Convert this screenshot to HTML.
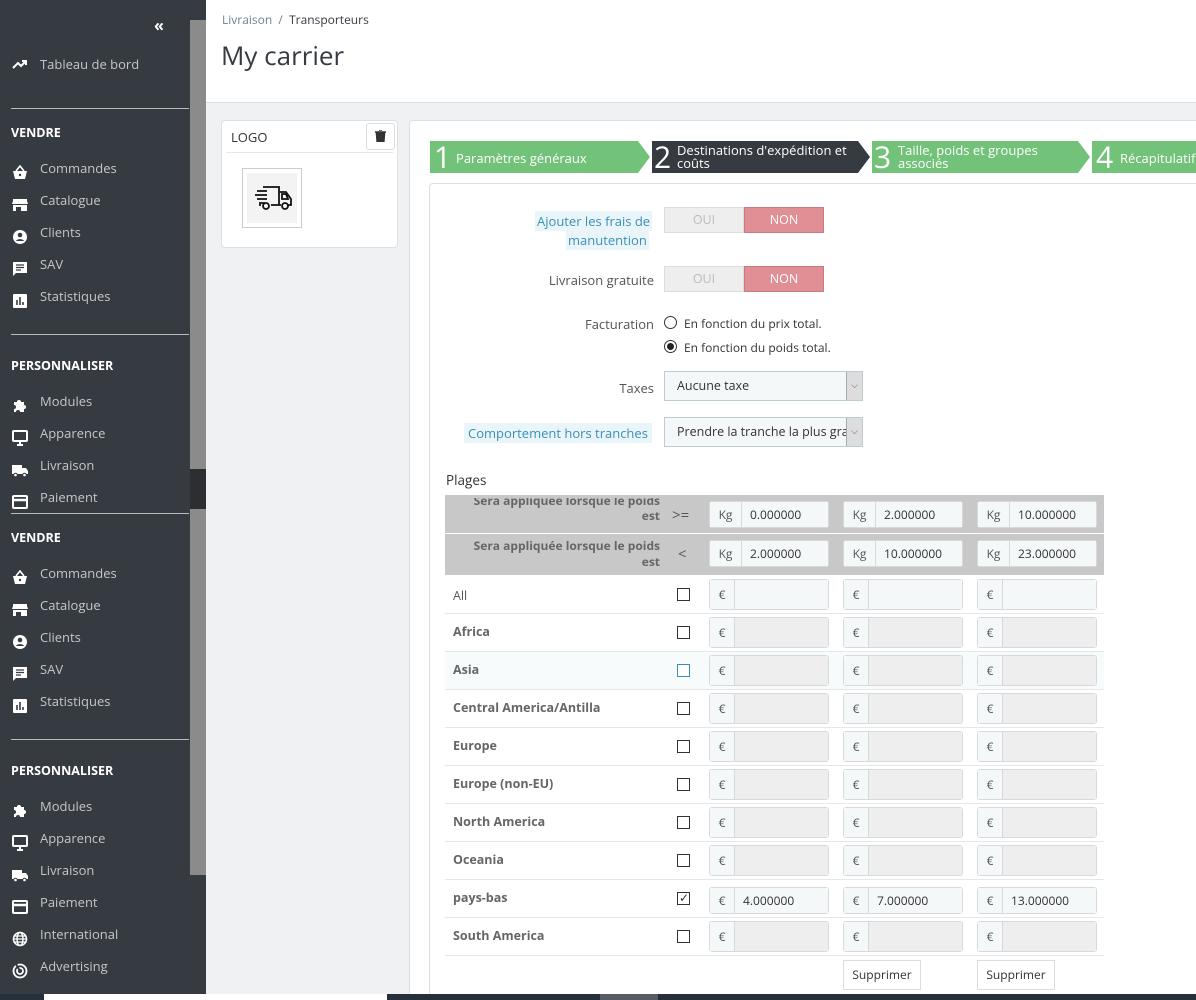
<!DOCTYPE html>
<html><head><meta charset="utf-8">
<style>
*{box-sizing:border-box;margin:0;padding:0}
html{width:1196px;height:1000px;overflow:hidden}
body{width:1196px;height:1000px;overflow:hidden;background:#eff1f2;font-family:"Open Sans","Liberation Sans",sans-serif;font-size:13px;color:#555;position:relative}
.a{position:absolute}
#sb{left:0;top:0;width:190px;height:1000px;background:#363a41;color:#bebebe}
.it{position:absolute;left:40px;font-size:13px;color:#c5c7ca}
.ic{position:absolute;left:12px;width:16px;height:14px}
.sec{position:absolute;left:11px;font-weight:bold;color:#fff;font-size:12.5px}
.hr{position:absolute;left:11px;width:178px;height:1px;background:#bbb}
.lbl{position:absolute;text-align:right;font-size:13px;color:#555}
.ig{position:absolute;width:120px;height:27px;border:1px solid #d6dadd;border-radius:3px;background:#eee;display:flex;font-size:12px}
.ig .ad{width:25px;background:#f5f8f9;border-right:1px solid #d6dadd;color:#555;text-align:center;line-height:25px}
.ig .kg{width:32px}
.ig .v{flex:1;background:#f5f8f9;padding-left:8px;line-height:25px;color:#333}
.ig .e{flex:1;background:#eee}
.cb{position:absolute;left:677px;width:13px;height:13px;border:1px solid #333;background:#fff}
.zn{position:absolute;left:453px;font-weight:bold;color:#666;font-size:12.5px}
.rl{position:absolute;left:445px;width:659px;height:1px;background:#e5e8ea}
.tg{position:absolute;left:664px;width:160px;height:26px;display:flex;font-size:12.5px}
.tg .o{width:80px;background:#eee;border:1px solid #ddd;color:#bbb;text-align:center;line-height:24px}
.tg .n{width:80px;background:#e08f95;border:1px solid #c97a80;color:#fff;text-align:center;line-height:24px}
.btn{position:absolute;top:960px;height:30px;border:1px solid #ddd;background:#fff;font-size:12px;color:#333;line-height:28px;text-align:center}
</style></head><body>
<div class="a" id="sb">
 <div class="a" style="left:154px;top:14px;color:#fff;font-size:16px;font-weight:bold">«</div>
 <svg class="ic" style="top:57px" viewBox="0 0 16 12"><path d="M1 10l5-5 3 3 5-5M10 3h4v4" stroke="#fff" stroke-width="2" fill="none"/></svg>
 <div class="it" style="top:55px">Tableau de bord</div>
 <div class="hr" style="top:108px"></div>
</div>
<div class="a" style="left:190px;top:0;width:16px;height:1000px;background:#8b8b8b"></div>
<div class="a" style="left:190px;top:0;width:16px;height:20px;background:#363a41"></div>
<div class="a" style="left:190px;top:469px;width:16px;height:40px;background:#2d2e32"></div>
<div class="a" style="left:190px;top:875px;width:16px;height:125px;background:#363a41"></div>

<div class="a" style="left:206px;top:0;width:990px;height:103px;background:#fff;border-bottom:1px solid #dde0e3"></div>
<div class="a" style="left:222px;top:11px;font-size:12px;color:#6c868e">Livraison &nbsp;/&nbsp; <span style="color:#363a41">Transporteurs</span></div>
<div class="a" style="left:221px;top:37px;font-size:26px;color:#363a41">My carrier</div>

<div class="a" style="left:221px;top:120px;width:177px;height:128px;background:#fff;border:1px solid #dbe0e3;border-radius:4px"></div>
<div class="a" style="left:231px;top:128px;font-size:13px;color:#333">LOGO</div>
<div class="a" style="left:366px;top:123px;width:29px;height:27px;border:1px solid #ddd;background:#fff;border-radius:3px"></div>
<svg class="a" style="left:375px;top:130px" width="11" height="12" viewBox="0 0 11 12"><path d="M0 2h11M4 0h3M1.5 3h8l-.7 9H2.2z" stroke="#333" stroke-width="1.6" fill="#333"/></svg>
<div class="a" style="left:226px;top:152px;width:167px;height:1px;background:#e5e8ea"></div>
<div class="a" style="left:242px;top:168px;width:60px;height:60px;border:1px solid #ccc;background:#fff"></div>
<div class="a" style="left:247px;top:173px;width:50px;height:50px;background:#f3f3f3"></div>
<svg class="a" style="left:251px;top:183px" width="42" height="30" viewBox="0 0 42 30"><path d="M12 4h16v18M28 9h7l5 7v6h-3M10 22h-2M20 22h10M6 8h10M4 12h12M6 16h10M8 20h6M31 11h4l2 5h-6z" stroke="#111" stroke-width="1.8" fill="none"/><circle cx="15" cy="23" r="3" stroke="#111" stroke-width="1.8" fill="none"/><circle cx="34" cy="23" r="3" stroke="#111" stroke-width="1.8" fill="none"/></svg>

<div class="a" style="left:409px;top:120px;width:800px;height:880px;background:#fff;border:1px solid #dbe0e3;border-radius:4px"></div>
<svg class="a" style="left:430px;top:141px" width="766" height="32">
 <polygon points="0,0 208,0 220,16 208,32 0,32" fill="#72c279"/>
 <polygon points="222,0 428,0 440,16 428,32 222,32" fill="#363a41"/>
 <polygon points="442,0 648,0 660,16 648,32 442,32" fill="#72c279"/>
 <polygon points="662,0 766,0 766,32 662,32" fill="#72c279"/>
</svg>
<div class="a" style="left:434px;top:139px;font-size:30px;color:#fff;line-height:36px">1</div>
<div class="a" style="left:456px;top:149px;font-size:13px;color:#fff">Paramètres généraux</div>
<div class="a" style="left:654px;top:139px;font-size:30px;color:#fff;line-height:36px">2</div>
<div class="a" style="left:677px;top:144px;font-size:13px;color:#fff;line-height:13px">Destinations d'expédition et<br>coûts</div>
<div class="a" style="left:874px;top:139px;font-size:30px;color:#fff;line-height:36px">3</div>
<div class="a" style="left:898px;top:144px;font-size:13px;color:#fff;line-height:13px">Taille, poids et groupes<br>associés</div>
<div class="a" style="left:1096px;top:139px;font-size:30px;color:#fff;line-height:36px">4</div>
<div class="a" style="left:1120px;top:149px;font-size:13px;color:#fff;white-space:nowrap">Récapitulatif</div>

<div class="a" style="left:429px;top:183px;width:780px;height:817px;background:#fff;border:1px solid #dbe0e3;border-radius:4px"></div>

<div class="a" style="left:535px;top:211px;background:#eaf5fa;color:#3a8fb7;font-size:13px;padding:0 2px;line-height:20px">Ajouter les frais de</div>
<div class="a" style="left:566px;top:230px;background:#eaf5fa;color:#3a8fb7;font-size:13px;padding:0 2px;line-height:20px">manutention</div>
<div class="tg" style="top:207px"><div class="o">OUI</div><div class="n">NON</div></div>
<div class="lbl" style="left:500px;width:154px;top:271px">Livraison gratuite</div>
<div class="tg" style="top:266px"><div class="o">OUI</div><div class="n">NON</div></div>
<div class="lbl" style="left:500px;width:154px;top:315px">Facturation</div>
<div class="a" style="left:664px;top:316px;width:13px;height:13px;border:1px solid #333;border-radius:50%"></div>
<div class="a" style="left:684px;top:315px;font-size:12px;color:#333">En fonction du prix total.</div>
<div class="a" style="left:664px;top:340px;width:13px;height:13px;border:1px solid #333;border-radius:50%"></div>
<div class="a" style="left:667px;top:343px;width:7px;height:7px;background:#222;border-radius:50%"></div>
<div class="a" style="left:684px;top:339px;font-size:12px;color:#333">En fonction du poids total.</div>
<div class="lbl" style="left:500px;width:154px;top:379px">Taxes</div>
<div class="a" style="left:664px;top:371px;width:199px;height:30px;border:1px solid #bbcdd2;background:#f5f8f9;font-size:12.5px;color:#333;padding-left:12px;line-height:28px">Aucune taxe</div>
<div class="a" style="left:846px;top:372px;width:16px;height:28px;background:#ddd;border-left:1px solid #aaa;font-size:9px;text-align:center;line-height:26px">⌵</div>
<div class="a" style="left:464px;top:423px;background:#eaf5fa;color:#3a8fb7;font-size:13px;padding:0 4px;line-height:20px">Comportement hors tranches</div>
<div class="a" style="left:664px;top:417px;width:199px;height:30px;border:1px solid #bbcdd2;background:#f5f8f9;font-size:12.5px;color:#333;padding-left:12px;line-height:28px;overflow:hidden;white-space:nowrap">Prendre la tranche la plus grande</div>
<div class="a" style="left:846px;top:418px;width:16px;height:28px;background:#ddd;border-left:1px solid #aaa;font-size:9px;text-align:center;line-height:26px">⌵</div>

<div class="a" style="left:446px;top:471px;font-size:13.5px;color:#333">Plages</div>

<div class="a" style="left:445px;top:495px;width:659px;height:38px;background:#c8c8c8"></div>
<div class="a" style="left:445px;top:534px;width:659px;height:41px;background:#c8c8c8"></div>
<div class="a" style="left:455px;top:498px;width:205px;text-align:right;font-weight:bold;color:#666;font-size:12px;line-height:15px;height:32px;overflow:hidden"><span style="position:relative;top:-5px">Sera appliquée lorsque le poids<br>est</span></div>
<div class="a" style="left:455px;top:538px;width:205px;text-align:right;font-weight:bold;color:#666;font-size:12px;line-height:16px">Sera appliquée lorsque le poids<br>est</div>
<div class="a" style="left:672px;top:505px;font-size:15px;color:#555">&gt;=</div>
<div class="a" style="left:678px;top:544px;font-size:15px;color:#555">&lt;</div>

<div id="rows"></div>
<div class="btn" style="left:843px;width:78px">Supprimer</div>
<div class="btn" style="left:977px;width:78px">Supprimer</div>

<div class="a" style="left:0;top:994px;width:1196px;height:6px;background:#25303a"></div>
<div class="a" style="left:44px;top:994px;width:343px;height:6px;background:#fff"></div>
<div class="a" style="left:600px;top:994px;width:58px;height:6px;background:#555c63"></div>

<script>
var IC={
Commandes:'<path d="M1 6h14l-2 8H3z" fill="#fff"/><path d="M4 6l4-5 4 5" stroke="#fff" stroke-width="1.6" fill="none"/><circle cx="8" cy="10" r="1.2" fill="#363a41"/>',
Catalogue:'<path d="M1 2h14v2l1 3H0l1-3z" fill="#fff"/><path d="M1 8h14v6H9v-4H4v4H1z" fill="#fff"/>',
Clients:'<circle cx="8" cy="8" r="7" fill="#fff"/><circle cx="8" cy="6" r="2.3" fill="#363a41"/><path d="M4 12c1-2.5 7-2.5 8 0" fill="#363a41"/>',
SAV:'<path d="M1 1h14v11H4l-3 3z" fill="#fff"/><path d="M4 4h8M4 6.5h8M4 9h5" stroke="#363a41" stroke-width="1.2"/>',
Statistiques:'<rect x="1" y="1" width="14" height="14" rx="1" fill="#fff"/><path d="M5 12V7M8 12V4M11 12V9" stroke="#363a41" stroke-width="1.6"/>',
Modules:'<path d="M2 4h3a2 2 0 1 1 4 0h3v3a2 2 0 1 1 0 4v3H8a2 2 0 1 0-4 0H2v-3a2 2 0 1 0 0-4z" fill="#fff"/>',
Apparence:'<rect x="1" y="1" width="14" height="10" rx="1" stroke="#fff" stroke-width="2" fill="none"/><path d="M5 15h6M8 11v4" stroke="#fff" stroke-width="2"/>',
Livraison:'<path d="M0 3h10v9H0zM10 6h4l2 3v3h-6z" fill="#fff"/><circle cx="3.5" cy="13" r="1.8" fill="#fff" stroke="#363a41"/><circle cx="12.5" cy="13" r="1.8" fill="#fff" stroke="#363a41"/>',
Paiement:'<rect x="1" y="2" width="14" height="12" rx="1" stroke="#fff" stroke-width="2" fill="none"/><path d="M1 6h14" stroke="#fff" stroke-width="2.5"/>',
International:'<circle cx="8" cy="8" r="6.5" stroke="#fff" stroke-width="1.6" fill="none"/><ellipse cx="8" cy="8" rx="3" ry="6.5" stroke="#fff" stroke-width="1.4" fill="none"/><path d="M1.5 8h13M2.5 5h11M2.5 11h11" stroke="#fff" stroke-width="1.2"/>',
Advertising:'<circle cx="8" cy="8" r="6.5" stroke="#fff" stroke-width="1.8" fill="none"/><circle cx="8" cy="8" r="3" stroke="#fff" stroke-width="1.8" fill="none"/><path d="M8 8L4 1" stroke="#363a41" stroke-width="2"/>'};
function icon(t,n){return '<svg class="a" style="left:12px;top:'+(t-3)+'px" width="16" height="16" viewBox="0 0 16 16">'+(IC[n]||'')+'</svg>';}
var h='';
function item(t,n){h+=icon(t+9,n)+'<div class="it" style="top:'+t+'px">'+n+'</div>';}
function grp(top){
 h+='<div class="sec" style="top:'+top+'px">VENDRE</div>';
 var n=['Commandes','Catalogue','Clients','SAV','Statistiques'];
 for(var i=0;i<5;i++)item(top+35+i*32,n[i]);
 h+='<div class="hr" style="top:'+(top+210)+'px"></div>';
 h+='<div class="sec" style="top:'+(top+233)+'px">PERSONNALISER</div>';
}
var m=['Modules','Apparence','Livraison','Paiement','International','Advertising'];
grp(124);
for(var i=0;i<4;i++)item(392+i*32,m[i]);
h+='<div class="hr" style="top:513px"></div>';
grp(529);
for(var i=0;i<6;i++)item(797+i*32,m[i]);
document.getElementById('sb').insertAdjacentHTML('beforeend',h);

var r='',cols=[709,843,977];
function ig(x,t,ad,val,kg){return '<div class="ig" style="left:'+x+'px;top:'+t+'px"><div class="ad'+(kg?' kg':'')+'">'+ad+'</div><div class="v">'+val+'</div></div>';}
var k1=['0.000000','2.000000','10.000000'],k2=['2.000000','10.000000','23.000000'];
for(var c=0;c<3;c++){r+=ig(cols[c],501,'Kg',k1[c],1)+ig(cols[c],540,'Kg',k2[c],1);}
var z=['All','Africa','Asia','Central America/Antilla','Europe','Europe (non-EU)','North America','Oceania','pays-bas','South America'];
var pv=['4.000000','7.000000','13.000000'];
for(var i=0;i<10;i++){
 var t=576+i*38;
 if(i==2)r+='<div class="a" style="left:445px;top:'+t+'px;width:659px;height:38px;background:#f7fbfc"></div>';
 r+='<div class="zn" style="top:'+(t+(i==0?11:9))+'px;'+(i==0?'font-weight:normal;color:#555':'')+'">'+z[i]+'</div>';
 r+='<div class="cb" style="top:'+(t+12)+'px;'+(i==2?'border-color:#3a8fb7':'')+'">'+(i==8?'<span style="position:absolute;left:1px;top:-4px;font-size:12px;color:#333">✓</span>':'')+'</div>';
 for(var c=0;c<3;c++){
  if(i==8) r+=ig(cols[c],t+7,'€',pv[c]);
  else if(i==0) r+='<div class="ig" style="left:'+cols[c]+'px;top:'+(t+3)+'px;height:31px;background:#f5f8f9"><div class="ad" style="line-height:29px">€</div><div class="v"></div></div>';
  else r+='<div class="ig" style="left:'+cols[c]+'px;top:'+(t+3)+'px;height:31px"><div class="ad" style="line-height:29px">€</div><div class="e"></div></div>';
 }
 r+='<div class="rl" style="top:'+(t+37)+'px"></div>';
}
document.getElementById('rows').insertAdjacentHTML('beforeend',r);
</script>
</body></html>
